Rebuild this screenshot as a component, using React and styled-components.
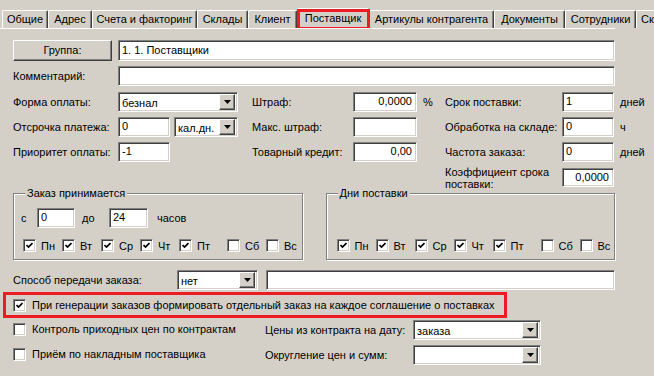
import React from 'react'
import styled, { createGlobalStyle, css } from 'styled-components'

const GlobalStyle = createGlobalStyle`
  html, body {
    margin: 0;
    padding: 0;
    background: #d4d0c8;
  }
  body {
    font-family: "Liberation Sans", Arial, sans-serif;
    font-size: 11px;
    color: #000;
  }
  #root {
    width: 654px;
    height: 376px;
    overflow: hidden;
  }
`

const sunken = css`
  box-sizing: border-box;
  background: #fff;
  border: 1px solid;
  border-color: #808080 #fff #fff #808080;
  box-shadow: inset 1px 1px #404040, inset -1px -1px #d4d0c8;
`

const raised = css`
  box-sizing: border-box;
  background: #d4d0c8;
  border: 1px solid;
  border-color: #fff #404040 #404040 #fff;
  box-shadow: inset -1px -1px #808080;
`

const Screen = styled.div`
  width: 654px;
  height: 376px;
  overflow: hidden;
`

const TabStrip = styled.div`
  display: flex;
  height: 18px;
  padding: 10px 0 0 2px;
  overflow: hidden;
  white-space: nowrap;
`

const Tab = styled.div`
  position: relative;
  flex: 0 0 ${p => p.$w}px;
  box-sizing: border-box;
  height: 18px;
  line-height: 17px;
  text-align: ${p => (p.$left ? 'left' : 'center')};
  padding-left: ${p => (p.$left ? 4 : 0)}px;
  border-top: 1px solid #fff;
  border-left: 1px solid #fff;
  border-right: 1px solid #404040;
  box-shadow: inset -1px 0 #808080;
  border-radius: 2px 2px 0 0;
  ${p => p.$active && css`
    margin-top: -2px;
    height: 21px;
    line-height: 18px;
    z-index: 1;
    &::after {
      content: '';
      position: absolute;
      left: -1px;
      top: 0;
      right: -2px;
      bottom: -1px;
      border: 3px solid #ed1c24;
    }
  `}
`

const Panel = styled.div`
  border-top: 1px solid #fff;
  padding: 11px 0 0 13px;
  width: 602px;
`

const Row = styled.div`
  display: flex;
  align-items: center;
  gap: ${p => p.$gap || 0}px;
  margin-top: ${p => p.$mt || 0}px;
  height: ${p => p.$h || 20}px;
`

const Label = styled.span`
  flex: 0 0 ${p => (p.$w ? `${p.$w}px` : 'auto')};
  padding-left: ${p => p.$pl || 0}px;
  white-space: nowrap;
  line-height: ${p => p.$lh || 13}px;
`

const WrapLabel = styled(Label)`
  grid-column: 6;
  white-space: normal;
`

const Button = styled.div`
  ${raised};
  flex: 0 0 99px;
  height: 21px;
  line-height: 19px;
  text-align: center;
  margin-right: 6px;
`

const TextBox = styled.div`
  ${sunken};
  flex: ${p => (p.$w ? `0 0 ${p.$w}px` : '1 1 auto')};
  width: ${p => (p.$w ? `${p.$w}px` : 'auto')};
  height: ${p => p.$h || 20}px;
  line-height: ${p => (p.$h || 20) - 3}px;
  margin-left: ${p => p.$ml || 0}px;
  padding: 0 4px 0 3px;
  text-align: ${p => p.$align || 'left'};
  white-space: nowrap;
  overflow: hidden;
`

const ComboBox = styled.div`
  ${sunken};
  flex: 0 0 ${p => p.$w}px;
  width: ${p => p.$w}px;
  height: 20px;
  display: flex;
  align-items: center;
  padding: 2px;
`

const ComboText = styled.span`
  flex: 1;
  padding-left: 1px;
  padding-top: 1px;
  overflow: hidden;
  white-space: nowrap;
`

const ComboButton = styled.div`
  ${raised};
  flex: 0 0 16px;
  height: 16px;
  display: flex;
  align-items: center;
  justify-content: center;
`

const Combo = ({ w, value }) => (
  <ComboBox $w={w}>
    <ComboText>{value}</ComboText>
    <ComboButton>
      <svg width="7" height="4" viewBox="0 0 7 4">
        <path d="M0 0h7L3.5 4z" fill="#000" />
      </svg>
    </ComboButton>
  </ComboBox>
)

const MainGrid = styled.div`
  display: grid;
  grid-template-columns: 105px 120px 115px 64px 28px 117px 52px 40px;
  grid-template-rows: 20px 20px 20px 21px;
  row-gap: 5px;
  align-items: center;
  margin-top: 6px;
`

const Cell = styled.div`
  display: flex;
  align-items: center;
  gap: 4px;
  white-space: nowrap;
`

const GroupRow = styled.div`
  display: flex;
  gap: 23px;
`

const GroupBox = styled.fieldset`
  box-sizing: border-box;
  width: 290px;
  height: 72px;
  margin: 0;
  padding: 9px 7px 0 7px;
  border: 1px solid #808080;
  box-shadow: 1px 1px 0 #fff, inset 1px 1px 0 #fff;
  min-width: 0;
`

const Legend = styled.legend`
  padding: 0 2px;
  margin-left: 4px;
  line-height: 11px;
  background: #d4d0c8;
`

const TimeRow = styled.div`
  display: flex;
  align-items: center;
  height: 20px;
`

const DayRow = styled.div`
  display: flex;
  align-items: center;
  margin: 11px 0 0 ${p => p.$ml}px;
  height: 13px;
`

const DayItem = styled.div`
  flex: 0 0 39px;
  display: flex;
  align-items: center;
  gap: 5px;
  margin-left: ${p => (p.$sep ? 9 : 0)}px;
`

const Box = styled.div`
  ${sunken};
  flex: 0 0 13px;
  width: 13px;
  height: 13px;
  display: flex;
  align-items: center;
  justify-content: center;
`

const Check = ({ on }) => (
  <Box>
    {on && (
      <svg width="7" height="7" viewBox="0 0 7 7">
        <path d="M0.5 3 L2.5 5 L6.5 1" stroke="#000" strokeWidth="1.7" fill="none" />
      </svg>
    )}
  </Box>
)

const Highlight = styled.div`
  box-sizing: border-box;
  width: 504px;
  height: 26px;
  margin: 2px 0 0 -10px;
  border: 3px solid #ed1c24;
  padding-left: 7px;
  display: flex;
  align-items: center;
  gap: 6px;
`

const OptionGrid = styled.div`
  display: grid;
  grid-template-columns: 252px 148px 128px;
  grid-template-rows: 20px 20px;
  row-gap: 5px;
  align-items: center;
  margin-top: 2px;
`

const Option = styled.div`
  display: flex;
  align-items: center;
  gap: 6px;
  white-space: nowrap;
  margin-top: -2px;
`

const days = ['Пн', 'Вт', 'Ср', 'Чт', 'Пт', 'Сб', 'Вс']

const Days = ({ ml }) => (
  <DayRow $ml={ml}>
    {days.map((d, i) => (
      <DayItem key={d} $sep={i === 5}>
        <Check on={i < 5} />
        <span>{d}</span>
      </DayItem>
    ))}
  </DayRow>
)

const tabs = [
  ['Общие', 46],
  ['Адрес', 44],
  ['Счета и факторинг', 105],
  ['Склады', 51],
  ['Клиент', 49],
  ['Поставщик', 72],
  ['Артикулы контрагента', 125],
  ['Документы', 71],
  ['Сотрудники', 71],
  ['Ск', 40],
]

const App = () => (
  <Screen>
    <GlobalStyle />
    <TabStrip>
      {tabs.map(([t, w], i) => (
        <Tab key={i} $w={w} $active={i === 5} $left={i === tabs.length - 1}>{t}</Tab>
      ))}
    </TabStrip>
    <Panel>
      <Row $h={21}>
        <Button>Группа:</Button>
        <TextBox $h={21}>1. 1. Поставщики</TextBox>
      </Row>
      <Row $mt={5}>
        <Label $w={105}>Комментарий:</Label>
        <TextBox />
      </Row>

      <MainGrid>
        <Label>Форма оплаты:</Label>
        <Cell><Combo w={120} value="безнал" /></Cell>
        <Label $pl={14}>Штраф:</Label>
        <TextBox $w={64} $align="right">0,0000</TextBox>
        <Label $pl={6}>%</Label>
        <Label>Срок поставки:</Label>
        <TextBox $w={52}>1</TextBox>
        <Label $pl={6}>дней</Label>

        <Label>Отсрочка платежа:</Label>
        <Cell>
          <TextBox $w={52}>0</TextBox>
          <Combo w={64} value="кал.дн." />
        </Cell>
        <Label $pl={14}>Макс. штраф:</Label>
        <TextBox $w={64} />
        <span />
        <Label>Обработка на складе:</Label>
        <TextBox $w={52}>0</TextBox>
        <Label $pl={6}>ч</Label>

        <Label>Приоритет оплаты:</Label>
        <Cell><TextBox $w={52}>-1</TextBox></Cell>
        <Label $pl={14}>Товарный кредит:</Label>
        <TextBox $w={64} $align="right">0,00</TextBox>
        <span />
        <Label>Частота заказа:</Label>
        <TextBox $w={52}>0</TextBox>
        <Label $pl={6}>дней</Label>

        <WrapLabel $lh={12}>Коэффициент срока поставки:</WrapLabel>
        <TextBox $w={52} $h={19} $align="right">0,0000</TextBox>
      </MainGrid>

      <GroupRow>
        <GroupBox>
          <Legend>Заказ принимается</Legend>
          <TimeRow>
            <Label $w={16}>с</Label>
            <TextBox $w={38}>0</TextBox>
            <Label $w={27} $pl={7}>до</Label>
            <TextBox $w={39}>24</TextBox>
            <Label $pl={9}>часов</Label>
          </TimeRow>
          <Days ml={2} />
        </GroupBox>
        <GroupBox>
          <Legend>Дни поставки</Legend>
          <TimeRow />
          <Days ml={3} />
        </GroupBox>
      </GroupRow>

      <Row $mt={10}>
        <Label $w={164}>Способ передачи заказа:</Label>
        <Combo w={81} value="нет" />
        <TextBox $ml={8} />
      </Row>

      <Highlight>
        <Check on />
        <span>При генерации заказов формировать отдельный заказ на каждое соглашение о поставках</span>
      </Highlight>

      <OptionGrid>
        <Option>
          <Check />
          <span>Контроль приходных цен по контрактам</span>
        </Option>
        <Label>Цены из контракта на дату:</Label>
        <Combo w={128} value="заказа" />
        <Option>
          <Check />
          <span>Приём по накладным поставщика</span>
        </Option>
        <Label>Округление цен и сумм:</Label>
        <Combo w={128} value="" />
      </OptionGrid>
    </Panel>
  </Screen>
)

export default App
